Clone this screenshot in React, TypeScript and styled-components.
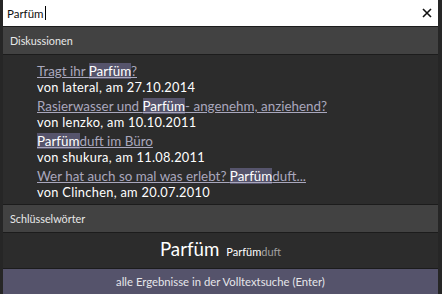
import React from "react";
import styled, { createGlobalStyle } from "styled-components";

const Global = createGlobalStyle`
  html, body { margin: 0; padding: 0; background: #2a2a2a; }
  body { width: 442px; height: 294px; overflow: hidden; font-family: Lato, "Open Sans", sans-serif; }
`;

const Page = styled.div`
  display: flex;
  width: 442px;
  height: 294px;
  background: #1f1f1f;
`;

const Side = styled.div<{ w: number }>`
  width: ${(p) => p.w}px;
  flex: none;
  background: #262626;
`;

const Panel = styled.div`
  flex: 1;
  display: flex;
  flex-direction: column;
  min-width: 0;
`;

const SearchBar = styled.div`
  height: 26px;
  background: #ffffff;
  display: flex;
  align-items: center;
  padding: 0 6px 0 4px;
  border-bottom: 1px solid #1c1c1c;
`;

const SearchText = styled.div`
  flex: 1;
  font-size: 11.5px;
  color: #111;
  display: flex;
  align-items: center;
`;

const Caret = styled.span`
  display: inline-block;
  width: 1px;
  height: 14px;
  background: #000;
  margin-left: 1px;
`;

const SectionHeader = styled.div`
  height: 27px;
  flex: none;
  background: #424242;
  color: #e8e8e8;
  font-size: 10.8px;
  display: flex;
  align-items: center;
  padding-left: 7px;
  border-bottom: 1px solid #1c1c1c;
`;

const List = styled.div`
  background: #2c2c2c;
  padding: 7px 0 0 34px;
  height: 150px;
  flex: none;
  display: flex;
  flex-direction: column;
  border-bottom: 1px solid #1c1c1c;
  box-sizing: border-box;
`;

const Item = styled.div`
  display: flex;
  flex-direction: column;
  height: 35px;
`;

const Title = styled.a`
  font-size: 13.4px;
  line-height: 18px;
  color: #a9a7bd;
  text-decoration: underline;
  text-underline-offset: 1px;
  align-self: flex-start;
`;

const Hl = styled.span`
  background: #56546c;
  color: #ffffff;
`;

const Meta = styled.div`
  font-size: 12.8px;
  letter-spacing: 0.3px;
  line-height: 15px;
  color: #ffffff;
`;

const KeywordRow = styled.div`
  height: 36px;
  flex: none;
  background: #2c2c2c;
  display: flex;
  align-items: baseline;
  justify-content: center;
  gap: 7px;
  padding-top: 5px;
  box-sizing: border-box;
  border-bottom: 1px solid #1c1c1c;
`;

const BigKw = styled.span`
  font-size: 18.7px;
  color: #ffffff;
`;

const SmallKw = styled.span`
  font-size: 11px;
  color: #a0a0a0;
`;

const Strong = styled.span`
  color: #ffffff;
`;

const Footer = styled.div`
  flex: 1;
  background: #55536b;
  color: #e6e6ea;
  font-size: 11.3px;
  display: flex;
  align-items: center;
  justify-content: center;
`;

const items = [
  { pre: "Tragt ihr ", hl: "Parfüm", post: "?", meta: "von lateral, am 27.10.2014" },
  { pre: "Rasierwasser und ", hl: "Parfüm", post: "- angenehm, anziehend?", meta: "von lenzko, am 10.10.2011" },
  { pre: "", hl: "Parfüm", post: "duft im Büro", meta: "von shukura, am 11.08.2011" },
  { pre: "Wer hat auch so mal was erlebt? ", hl: "Parfüm", post: "duft...", meta: "von Clinchen, am 20.07.2010" },
];

export default function App() {
  return (
    <>
      <Global />
      <Page>
        <Side w={3} />
        <Panel>
          <SearchBar>
            <SearchText>
              Parfüm<Caret />
            </SearchText>
            <svg width="10" height="10" viewBox="0 0 10 10">
              <path d="M1 1 L9 9 M9 1 L1 9" stroke="#111" strokeWidth="1.6" />
            </svg>
          </SearchBar>
          <SectionHeader>Diskussionen</SectionHeader>
          <List>
            {items.map((it, i) => (
              <Item key={i}>
                <Title>
                  {it.pre}
                  <Hl>{it.hl}</Hl>
                  {it.post}
                </Title>
                <Meta>{it.meta}</Meta>
              </Item>
            ))}
          </List>
          <SectionHeader>Schlüsselwörter</SectionHeader>
          <KeywordRow>
            <BigKw>Parfüm</BigKw>
            <SmallKw>
              <Strong>Parfüm</Strong>duft
            </SmallKw>
          </KeywordRow>
          <Footer>alle Ergebnisse in der Volltextsuche (Enter)</Footer>
        </Panel>
        <Side w={4} />
      </Page>
    </>
  );
}
